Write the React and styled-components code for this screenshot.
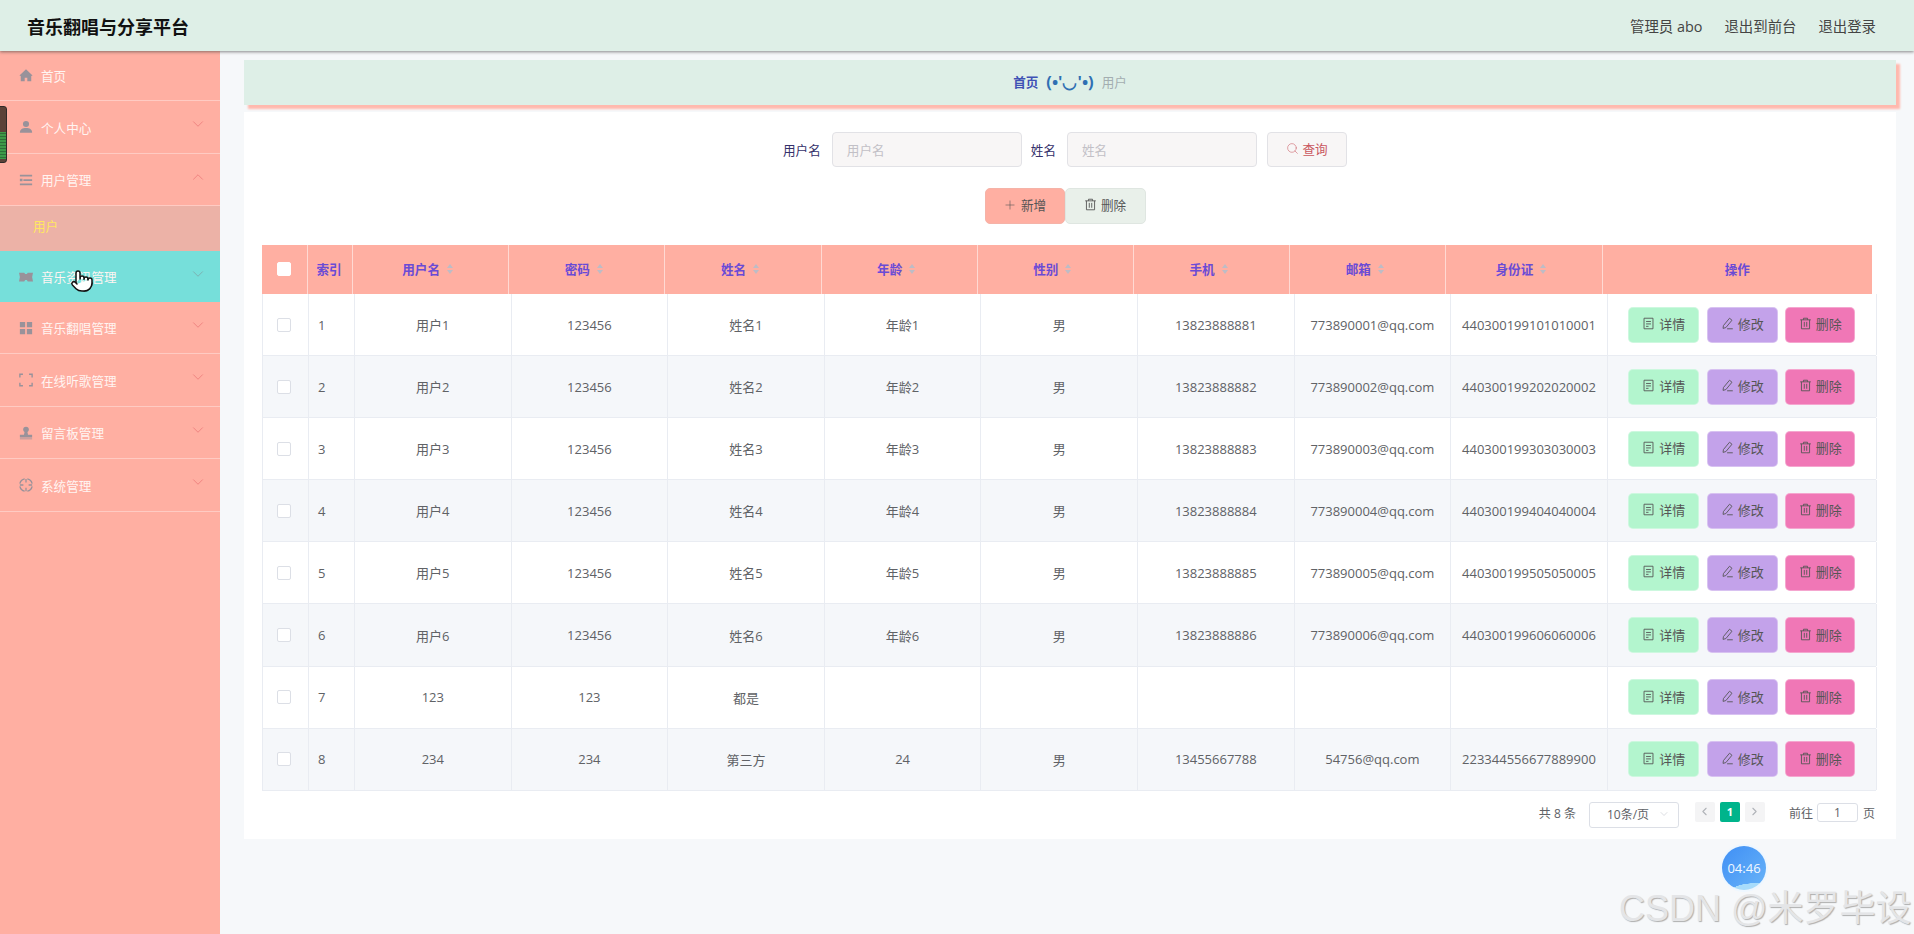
import React from "react";
import styled, { createGlobalStyle } from "styled-components";
import { ChevronDown, ChevronUp, ChevronLeft, ChevronRight, Plus, Search, Pointer } from "lucide-react";

const cjk = `"Noto Sans CJK SC", "Noto Sans", sans-serif`;

const Global = createGlobalStyle`
  html, body { margin: 0; padding: 0; height: 100%; overflow: hidden; }
  body { font-family: "Open Sans", ${cjk}; background: #f6f8fa; }
  * { box-sizing: border-box; }
`;

const Page = styled.div`
  position: relative;
  width: 1914px;
  height: 934px;
  overflow: hidden;
  display: flex;
  flex-direction: column;
`;
const Header = styled.header`
  position: relative;
  z-index: 2;
  flex: 0 0 51px;
  display: flex;
  align-items: center;
  justify-content: space-between;
  padding: 0 38px 0 27px;
  background: #deefe7;
  box-shadow: 0 1px 3px rgba(60, 60, 60, 0.6);
`;
const Title = styled.div`
  font: 700 18px ${cjk};
  color: #111;
`;
const HeadLinks = styled.div`
  display: flex;
  gap: 22px;
  font-size: 14.4px;
  color: #444;
`;
const Body = styled.div`
  flex: 1;
  display: flex;
  min-height: 0;
`;
const Side = styled.aside`
  flex: 0 0 220px;
  background: #ffafa2;
  font: 12.6px ${cjk};
  color: #fff5f2;
`;
const MenuItem = styled.div`
  height: ${(p) => p.$h || 52.5}px;
  display: flex;
  align-items: center;
  padding: ${(p) => (p.$plain ? 0 : "1px")} 13px 0 19px;
  gap: 8px;
  border-bottom: ${(p) => (p.$active ? "none" : "1px solid #ffcbc3")};
  background: ${(p) => (p.$active ? "#76dfda" : "transparent")};
  svg.mi { color: #99929a; flex: none; }
  span { flex: 1; }
  svg.chev {
    color: ${(p) => (p.$active ? "#7f9497" : "#e6686c")};
    flex: none;
    margin-top: -6px;
  }
`;
const SubItem = styled.div`
  height: 45px;
  display: flex;
  align-items: center;
  padding: 0 0 6px 33px;
  color: #ffe761;
  background: #ecb2a7;
`;
const Main = styled.main`
  flex: 1;
  padding: 9px 18px 0 24px;
  min-width: 0;
`;
const Crumb = styled.div`
  height: 45px;
  display: flex;
  align-items: center;
  justify-content: center;
  gap: 8px;
  padding-bottom: 3px;
  background: #deefe7;
  box-shadow: 4px 4px 2px #ffb9ae;
  font: 12.6px ${cjk};
  color: #a3adb0;
  b { color: #3f51b5; font-weight: 700; }
  i { color: #2f6fb3; font: 700 16.5px "Open Sans", sans-serif; }
`;
const Panel = styled.section`
  margin-top: 7px;
  height: 727px;
  background: #fff;
  padding: 20px 20px 0 18px;
`;
const SearchRow = styled.div`
  display: flex;
  align-items: center;
  justify-content: center;
  padding-right: 8px;
  font: 12.6px ${cjk};
  color: #35316b;
`;
const Label = styled.label`
  margin-right: 10px;
`;
const Field = styled.div`
  width: ${(p) => p.$w}px;
  height: 35px;
  margin: 0 ${(p) => p.$mr}px 0 1px;
  display: flex;
  align-items: center;
  padding-left: 14px;
  background: #f8f6f6;
  border: 1px solid #e2e2e6;
  border-radius: 4px;
  color: #c2c0c6;
`;
const QueryBtn = styled.button`
  width: 80px;
  height: 35px;
  display: flex;
  align-items: center;
  justify-content: center;
  gap: 3px;
  padding: 0 0 2px;
  background: #f8f6f6;
  border: 1px solid #e2e2e6;
  border-radius: 4px;
  font: 12.6px ${cjk};
  color: #c9565e;
`;
const ActionRow = styled.div`
  display: flex;
  justify-content: center;
  padding-right: 8px;
  margin-top: 21px;
`;
const TopBtn = styled.button`
  width: ${(p) => p.$w}px;
  height: 36px;
  display: flex;
  align-items: center;
  justify-content: center;
  gap: 4px;
  padding: 0 0 3px;
  background: ${(p) => p.$bg};
  border: 1px solid ${(p) => p.$bd};
  border-radius: 5px;
  font: 12.6px ${cjk};
  color: #555;
`;
const Table = styled.div`
  margin-top: 21px;
  width: 1614px;
`;
const HeadRow = styled.div`
  display: grid;
  grid-template-columns: 45.5px 45.5px repeat(8, 156.2px) 269.5px;
  height: 49px;
  background: #ffafa2;
  width: 1610px;
  font: 700 12.6px ${cjk};
  color: #6a4bd6;
`;
const HeadCell = styled.div`
  display: flex;
  align-items: center;
  justify-content: ${(p) => (p.$left ? "flex-start" : "center")};
  gap: 7px;
  padding: 0 ${(p) => (p.$sort ? "6px" : "0")} 2px ${(p) => (p.$left ? "9px" : "0")};
  border-right: 1px solid #ffd9d3;
  &:last-child { border-right: none; }
`;
const Sort = styled.span`
  display: inline-flex;
  flex-direction: column;
  gap: 2px;
  &::before, &::after {
    content: "";
    width: 0;
    height: 0;
    border-left: 3.5px solid transparent;
    border-right: 3.5px solid transparent;
  }
  &::before { border-bottom: 4.5px solid #bdbcc6; }
  &::after { border-top: 4.5px solid #bdbcc6; }
`;
const Row = styled.div`
  display: grid;
  grid-template-columns: 46px 46px repeat(8, 156.6px) 269.2px;
  height: 62.1px;
  background: ${(p) => (p.$even ? "#f5f7fa" : "#fff")};
  border-bottom: 1px solid #e9ecf2;
  border-left: 1px solid #e9ecf2;
  font: 13px "Open Sans", ${cjk};
  color: #606266;
`;
const Cell = styled.div`
  display: flex;
  align-items: center;
  justify-content: ${(p) => (p.$left ? "flex-start" : "center")};
  padding-left: ${(p) => (p.$left ? "9px" : "0")};
  gap: 7.5px;
  border-right: 1px solid #e9ecf2;
  white-space: nowrap;
`;
const Check = styled.span`
  width: 14px;
  height: 14px;
  margin-right: ${(p) => (p.$head ? "0" : "4px")};
  border-radius: 2px;
  background: #fff;
  border: 1px solid ${(p) => (p.$head ? "#fff" : "#dcdfe6")};
`;
const OpBtn = styled.button`
  width: ${(p) => p.$w}px;
  height: 36px;
  display: flex;
  align-items: center;
  justify-content: center;
  gap: 4px;
  padding: 0 0 2px;
  background: ${(p) => p.$bg};
  border: 1px solid rgba(255, 255, 255, 0.35);
  border-radius: 5px;
  font: 13px ${cjk};
  color: #555;
`;
const Pager = styled.div`
  margin-top: 11px;
  height: 26px;
  padding-right: 1px;
  display: flex;
  justify-content: flex-end;
  align-items: flex-start;
  font: 12px "Open Sans", ${cjk};
  color: #606266;
`;
const Total = styled.span`
  margin: 2px 13px 0 0;
`;
const PageSel = styled.div`
  width: 90px;
  height: 26px;
  margin-right: 16px;
  display: flex;
  align-items: center;
  justify-content: space-between;
  padding: 0 8px 2px 17px;
  border: 1px solid #dcdfe6;
  border-radius: 3px;
  svg { color: #b8bcc4; }
`;
const PageBox = styled.span`
  width: 20px;
  height: 20px;
  margin-right: ${(p) => p.$mr}px;
  display: flex;
  align-items: center;
  justify-content: center;
  border-radius: 2px;
  background: ${(p) => (p.$on ? "#00b48b" : "#f4f4f5")};
  color: ${(p) => (p.$on ? "#fff" : "#b0b3b8")};
  font-weight: 700;
  font-size: 11px;
`;
const Goto = styled.span`
  margin-top: 2px;
`;
const GotoInput = styled.span`
  width: 41px;
  height: 19px;
  margin: 1px 5px 0 4px;
  display: flex;
  align-items: center;
  justify-content: center;
  border: 1px solid #dcdfe6;
  border-radius: 3px;
`;
const Timer = styled.div`
  position: absolute;
  left: 1722px;
  top: 846px;
  width: 44px;
  height: 44px;
  border-radius: 50%;
  display: flex;
  align-items: center;
  justify-content: center;
  background:
    radial-gradient(ellipse 34px 12px at 75% 104%, #a8dcfb 0 70%, transparent 72%),
    linear-gradient(135deg, #3f8ff5, #69b4f8);
  box-shadow: 0 0 0 2px #eef7ff;
  color: #f2f8ff;
  font: 13px "Open Sans", sans-serif;
`;
const Mark = styled.div`
  position: absolute;
  left: 1619px;
  top: 879px;
  font: 36px "Liberation Sans", ${cjk};
  color: #e4e5e7;
  text-shadow: 1px 1px 1px #aeaeae;
  white-space: nowrap;
`;
const Widget = styled.div`
  position: absolute;
  left: -3px;
  top: 106px;
  width: 10px;
  height: 57px;
  border-radius: 3px;
  border: 1px solid #2f2a28;
  background:
    linear-gradient(#5b4238 0 45%, transparent 45% 95%, #5b4238 95%),
    repeating-linear-gradient(#3e9a48 0 2px, #2f6f38 2px 3px);
`;
const Hand = styled.div`
  position: absolute;
  left: 70px;
  top: 269px;
  color: #111;
`;

const I = ({ children, w = 14 }) => (
  <svg className="mi" width={w} height="14" viewBox="0 0 16 16" fill="currentColor">{children}</svg>
);
const icons = {
  home: <I><path d="M8 1.500 0.500 8.500 2 9v6h4.500v-4h3v4H14V9l1.500-.5z" /></I>,
  user: <I><circle cx="8" cy="4.500" r="3.500" /><path d="M1 14.500c0-4 3-5.500 7-5.500s7 1.500 7 5.500z" /></I>,
  menu: <I><path d="M1 2h14v2H1zM5 7h10v2H5zM1 12h14v2H1zM1 6.500h3v3H1z" /></I>,
  ticket: <I><path d="M0 3h6l1 1.500h2L10 3h6l-1 5 1 5h-6l-1-1.500H7L6 13H0l1-5z" /></I>,
  grid: <I><path d="M1 1h6v6H1zM9 1h6v6H9zM1 9h6v6H1zM9 9h6v6H9z" /></I>,
  full: <I><path fill="none" stroke="currentColor" strokeWidth="1.600" d="M1 5V1.500h3.500M11.500 1.500H15V5M15 11v3.500h-3.500M4.500 14.500H1V11" /></I>,
  stamp: <I><circle cx="8" cy="4" r="3.200" /><path d="M6.500 6h3l.8 4H15v3H1v-3h4.700zM1 14.200h14v1H1z" /></I>,
  target: <I><path fill="none" stroke="currentColor" strokeWidth="1.500" d="M6.500 1a7 7 0 0 0-5.500 5.500M9.500 1a7 7 0 0 1 5.500 5.500M1 9.500A7 7 0 0 0 6.500 15M15 9.500A7 7 0 0 1 9.500 15M8 1v4M8 11v4M1 8h4M11 8h4" /></I>,
};
const Small = ({ children, c = "#555" }) => (
  <svg width="13" height="13" viewBox="0 0 16 16" fill="none" stroke={c} strokeWidth="1.100">{children}</svg>
);
const TrashIcon = () => <Small><path d="M1.500 3.500h13M5.500 3.500V1.500h5v2M3 3.500V14.500h10V3.500M6.500 6v6M9.500 6v6" /></Small>;
const DocIcon = () => <Small><path d="M2.500 1.500h11v13h-11zM5 5.500h6M5 8.500h6M5 11.500h3" /></Small>;
const EditIcon = () => <Small><path d="M10.500 1.500 13.500 4 6 13l-3.500 1 .5-3.500zM7.500 14.500h7" /></Small>;

const Chev = ({ up }) => {
  const C = up ? ChevronUp : ChevronDown;
  return <C className="chev" size={18} strokeWidth={0.8} />;
};

const menu = [
  ["首页", "home", 0, 49.5],
  ["个人中心", "user", "d", 53],
  ["用户管理", "menu", "u", 52],
];
const menu2 = [
  ["音乐翻唱管理", "grid"],
  ["在线听歌管理", "full"],
  ["留言板管理", "stamp"],
  ["系统管理", "target"],
];

const rows = [
  ...[1, 2, 3, 4, 5, 6].map((n) => [
    n, `用户${n}`, "123456", `姓名${n}`, `年龄${n}`, "男",
    `1382388888${n}`, `77389000${n}@qq.com`, `44030019${9}${n}0${n}0${n}000${n}`,
  ]),
  [7, "123", "123", "都是", "", "", "", "", ""],
  [8, "234", "234", "第三方", "24", "男", "13455667788", "54756@qq.com", "223344556677889900"],
];
const heads = ["用户名", "密码", "姓名", "年龄", "性别", "手机", "邮箱", "身份证"];

export default function App() {
  return (
    <Page>
      <Global />
      <Header>
        <Title>音乐翻唱与分享平台</Title>
        <HeadLinks>
          <span>管理员 abo</span>
          <span>退出到前台</span>
          <span>退出登录</span>
        </HeadLinks>
      </Header>
      <Body>
        <Side>
          {menu.map(([t, ic, ch, h]) => (
            <MenuItem key={t} $h={h} $plain={!ch}>
              {icons[ic]}
              <span>{t}</span>
              {ch === "d" && <Chev />}
              {ch === "u" && <Chev up />}
            </MenuItem>
          ))}
          <SubItem>用户</SubItem>
          <MenuItem $active $h={51}>
            {icons.ticket}
            <span>音乐资讯管理</span>
            <Chev />
          </MenuItem>
          {menu2.map(([t, ic]) => (
            <MenuItem key={t}>
              {icons[ic]}
              <span>{t}</span>
              <Chev />
            </MenuItem>
          ))}
        </Side>
        <Main>
          <Crumb>
            <b>首页</b>
            <i>(•'◡'•)</i>
            <span>用户</span>
          </Crumb>
          <Panel>
            <SearchRow>
              <Label>用户名</Label>
              <Field $w={190} $mr={9}>用户名</Field>
              <Label>姓名</Label>
              <Field $w={190} $mr={10}>姓名</Field>
              <QueryBtn><Search size={13} strokeWidth={1} />查询</QueryBtn>
            </SearchRow>
            <ActionRow>
              <TopBtn $w={80} $bg="#ffafa2" $bd="#f5b3a8"><Plus size={14} strokeWidth={1} />新增</TopBtn>
              <TopBtn $w={81} $bg="#e9f0ea" $bd="#dfe6e1"><TrashIcon />删除</TopBtn>
            </ActionRow>
            <Table>
              <HeadRow>
                <HeadCell><Check $head /></HeadCell>
                <HeadCell $left>索引</HeadCell>
                {heads.map((h) => <HeadCell key={h} $sort>{h}<Sort /></HeadCell>)}
                <HeadCell>操作</HeadCell>
              </HeadRow>
              {rows.map((r, i) => (
                <Row key={r[0]} $even={i % 2 === 1}>
                  <Cell><Check /></Cell>
                  <Cell $left>{r[0]}</Cell>
                  {r.slice(1).map((v, j) => <Cell key={j}>{v}</Cell>)}
                  <Cell>
                    <OpBtn $w={71} $bg="#b3f5ce"><DocIcon />详情</OpBtn>
                    <OpBtn $w={71} $bg="#c3a2ea"><EditIcon />修改</OpBtn>
                    <OpBtn $w={70} $bg="#f077b6"><TrashIcon />删除</OpBtn>
                  </Cell>
                </Row>
              ))}
            </Table>
            <Pager>
              <Total>共 8 条</Total>
              <PageSel>10条/页<ChevronDown size={12} strokeWidth={1} /></PageSel>
              <PageBox $mr={5}><ChevronLeft size={13} /></PageBox>
              <PageBox $on $mr={5}>1</PageBox>
              <PageBox $mr={24}><ChevronRight size={13} /></PageBox>
              <Goto>前往</Goto>
              <GotoInput>1</GotoInput>
              <Goto>页</Goto>
            </Pager>
          </Panel>
        </Main>
      </Body>
      <Widget />
      <Hand><Pointer size={24} fill="#fff" strokeWidth={1.500} /></Hand>
      <Timer>04:46</Timer>
      <Mark>CSDN @米罗毕设</Mark>
    </Page>
  );
}
